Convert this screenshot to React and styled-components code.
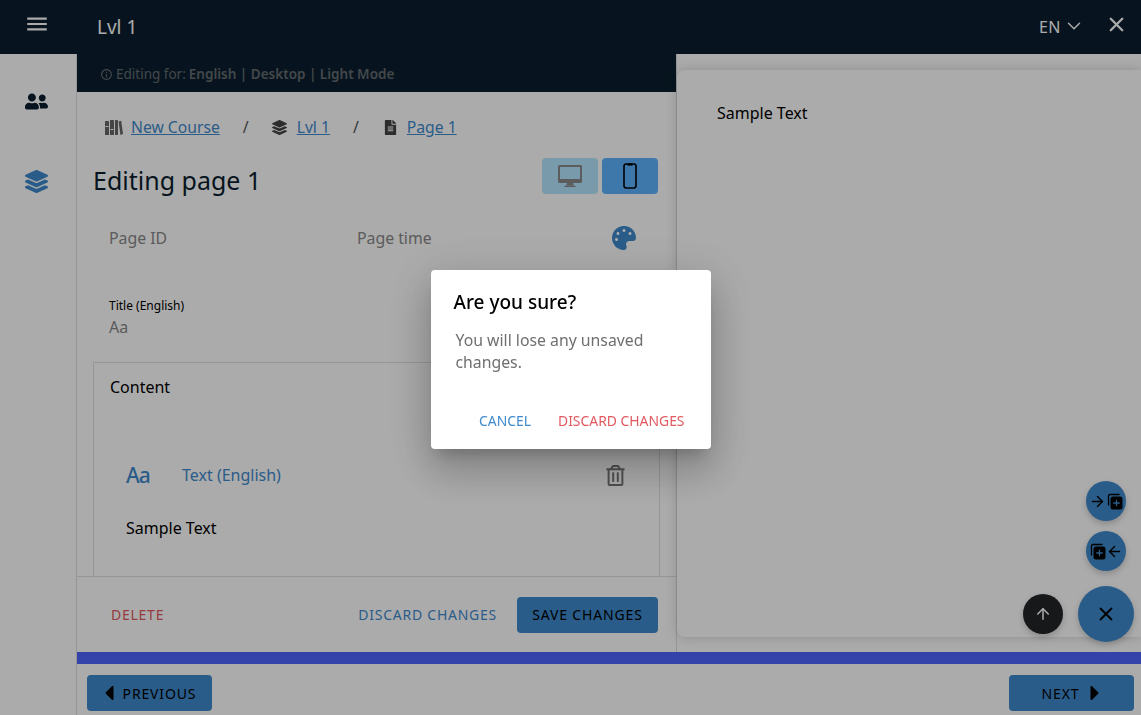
import styled, { createGlobalStyle } from "styled-components";
import {
  FaUserFriends,
  FaLayerGroup,
  FaFileAlt,
  FaPalette,
  FaRegTrashAlt,
  FaCaretLeft,
  FaCaretRight,
} from "react-icons/fa";
import { MdMenu, MdInfoOutline } from "react-icons/md";
import { FiChevronDown, FiX, FiArrowUp, FiArrowRight, FiArrowLeft } from "react-icons/fi";

const GlobalStyle = createGlobalStyle`
  html, body {
    margin: 0;
    padding: 0;
    height: 100%;
    overflow: hidden;
    background: #fff;
    font-family: "Noto Sans", "Open Sans", sans-serif;
    color: #000;
  }
  * { box-sizing: border-box; }
`;

const Page = styled.div`
  width: 100vw;
  height: 100vh;
  display: flex;
  overflow: hidden;
`;

const Sidebar = styled.nav`
  width: 77px;
  flex: none;
  border-right: 1px solid #e0e0e0;
  display: flex;
  flex-direction: column;
  align-items: center;
`;

const MenuCell = styled.div`
  width: 77px;
  height: 54px;
  background: #0b1f2f;
  color: #fff;
  display: flex;
  justify-content: center;
  padding: 11px 3px 0 0;
  font-size: 26px;
`;

const NavIcon = styled.div`
  color: ${(p) => p.$color};
  font-size: 23px;
  height: 23px;
  display: flex;
  margin: ${(p) => p.$top}px 3px 0 0;
`;

const Main = styled.div`
  flex: 1;
  min-width: 0;
  display: flex;
  flex-direction: column;
`;

const TopBar = styled.header`
  height: 54px;
  flex: none;
  background: #0b1f2f;
  color: #fff;
  display: flex;
  align-items: center;
  padding: 0 13px 0 20px;
`;

const TopTitle = styled.div`
  flex: 1;
  font-size: 19px;
`;

const Lang = styled.div`
  display: flex;
  align-items: center;
  font-size: 16px;
  letter-spacing: 0.5px;
  margin-right: 20px;
  svg { font-size: 22px; margin-left: 2px; margin-top: -3px; stroke-width: 1.6; }
`;

const CloseTop = styled.div`
  display: flex;
  font-size: 23px;
  margin-top: -5px;
  svg { stroke-width: 2.4; }
`;

const Columns = styled.div`
  height: 598px;
  flex: none;
  display: flex;
`;

const Editor = styled.section`
  width: 600px;
  flex: none;
  border-right: 1px solid #e0e0e0;
  display: flex;
  flex-direction: column;
`;

const EditingFor = styled.div`
  height: 38px;
  flex: none;
  background: #0b1f2f;
  color: #656c70;
  font-size: 13.5px;
  display: flex;
  align-items: center;
  gap: 3px;
  padding: 2px 0 0 23px;
  b { font-weight: 600; margin-left: 0; }
  svg { font-size: 13px; }
`;

const Scroll = styled.div`
  flex: 1;
  min-height: 0;
  overflow: hidden;
  padding: 0 16px;
`;

const Crumbs = styled.div`
  height: 70px;
  display: flex;
  align-items: center;
  padding-left: 12px;
  font-size: 15.7px;
`;

const Crumb = styled.div`
  display: flex;
  align-items: center;
  gap: ${(p) => p.$gap}px;
  color: #444;
  svg { font-size: 15px; flex: none; }
`;

const CrumbLink = styled.a`
  color: #3f8acd;
  text-decoration: underline;
`;

const Slash = styled.span`
  color: #555;
  margin: 0 ${(p) => p.$left}px 0 ${(p) => p.$gap}px;
`;

const TitleRow = styled.div`
  height: 36px;
  margin-top: -4px;
  display: flex;
  align-items: center;
  justify-content: space-between;
  padding-right: 2px;
`;

const Heading = styled.h1`
  margin: 8px 0 0;
  font-size: 25px;
  font-weight: 400;
  color: #0b1f2f;
`;

const ViewToggle = styled.div`
  display: flex;
  gap: 4px;
`;

const ViewButton = styled.div`
  width: 56px;
  height: 36px;
  border-radius: 4px;
  background: ${(p) => (p.$active ? "#5db4ff" : "#b5e6ff")};
  display: flex;
  align-items: center;
  justify-content: center;
`;

const MetaRow = styled.div`
  margin-top: 26px;
  height: 36px;
  display: flex;
  align-items: center;
  padding: 0 24px 0 16px;
  font-size: 15.8px;
  color: #888;
`;

const MetaItem = styled.div`
  width: 248px;
`;

const Palette = styled.div`
  margin-left: auto;
  display: flex;
  color: #3f8acd;
  font-size: 24px;
`;

const Field = styled.div`
  margin-top: 42px;
  padding-left: 16px;
  height: 64px;
`;

const FieldLabel = styled.div`
  font-size: 12px;
  line-height: 16px;
  color: #000;
`;

const FieldValue = styled.div`
  margin-top: 2px;
  font-size: 16px;
  line-height: 22px;
  color: #888;
`;

const ContentBox = styled.div`
  border: 1px solid #e0e0e0;
  width: 567px;
  height: 300px;
  padding: 13px 16px;
`;

const BoxTitle = styled.div`
  font-size: 16px;
  line-height: 22px;
`;

const TextHead = styled.div`
  margin-top: 60px;
  height: 34px;
  display: flex;
  align-items: center;
  padding: 0 17px 0 16px;
`;

const AaMark = styled.span`
  width: 56px;
  color: #3f8acd;
  font-size: 21px;
  font-weight: 500;
  letter-spacing: -1px;
`;

const TextLabel = styled.span`
  flex: 1;
  color: #3f8acd;
  font-size: 16px;
`;

const Trash = styled.div`
  display: flex;
  color: #777;
  font-size: 21px;
`;

const Sample = styled.p`
  margin: 25px 0 0 16px;
  font-size: 16px;
  line-height: 22px;
`;

const Actions = styled.div`
  height: 76px;
  flex: none;
  border-top: 1px solid #e0e0e0;
  display: flex;
  align-items: center;
  padding: 0 18px 0 34px;
  font-size: 14px;
  letter-spacing: 0.75px;
`;

const TextAction = styled.span`
  color: ${(p) => p.$color};
  margin: ${(p) => p.$margin || 0};
`;

const FilledButton = styled.div`
  height: 36px;
  border-radius: 4px;
  background: #3f8acd;
  color: #000;
  font-size: 14px;
  letter-spacing: 0.85px;
  display: flex;
  align-items: center;
  justify-content: center;
  gap: ${(p) => p.$gap || 0}px;
  width: ${(p) => p.$width}px;
  padding: ${(p) => p.$pad || "0"};
  svg { font-size: 24px; }
`;

const Preview = styled.section`
  flex: 1;
  min-width: 0;
  padding-top: 16px;
`;

const PreviewCard = styled.div`
  height: 567px;
  border-radius: 8px 0 0 8px;
  background: #fff;
  box-shadow: 0 0 12px rgba(0, 0, 0, 0.18);
  padding: 32px 40px;
  font-size: 16px;
  line-height: 22px;
`;

const ProgressBar = styled.div`
  height: 12px;
  flex: none;
  background: #4c64fc;
`;

const Footer = styled.footer`
  flex: 1;
  display: flex;
  align-items: center;
  justify-content: space-between;
  padding: 7px 7px 0 10px;
`;

const Fab = styled.div`
  position: absolute;
  left: ${(p) => p.$x - p.$size / 2}px;
  top: ${(p) => p.$y - p.$size / 2}px;
  width: ${(p) => p.$size}px;
  height: ${(p) => p.$size}px;
  border-radius: 50%;
  background: ${(p) => p.$bg};
  color: ${(p) => p.$fg};
  box-shadow: 0 3px 6px rgba(0, 0, 0, 0.2);
  display: flex;
  align-items: center;
  justify-content: center;
  font-size: ${(p) => p.$font}px;
`;

const Overlay = styled.div`
  position: fixed;
  inset: 0;
  background: rgba(0, 0, 0, 0.33);
  display: flex;
  align-items: center;
  justify-content: center;
  padding-top: 4px;
`;

const Dialog = styled.div`
  width: 280px;
  height: 179px;
  background: #fff;
  border-radius: 4px;
  box-shadow: 0 11px 15px -7px rgba(0, 0, 0, 0.2), 0 24px 38px 3px rgba(0, 0, 0, 0.14),
    0 9px 46px 8px rgba(0, 0, 0, 0.12);
  padding: 19px 26px 0 23px;
`;

const DialogTitle = styled.h2`
  margin: 0;
  font-size: 19px;
  line-height: 26px;
  font-weight: 500;
  color: #000;
`;

const DialogBody = styled.p`
  margin: 14px 0 0 2px;
  font-size: 15.8px;
  line-height: 22px;
  color: #6f6f6f;
`;

const DialogActions = styled.div`
  margin-top: 38px;
  display: flex;
  justify-content: flex-end;
  gap: 27px;
  font-size: 13.9px;
  line-height: 20px;
`;

const AddCopyFrom = styled.span`
  display: flex;
  align-items: center;
  gap: ${(p) => p.$gap}px;
`;

const PhoneGlyph = () => (
  <svg width="14" height="26" viewBox="0 0 14 26" fill="none" stroke="#000" strokeWidth="1.6">
    <rect x="1" y="1" width="12" height="24" rx="2.2" />
    <path d="M4.5 1.6h5" strokeWidth="2" />
  </svg>
);

const DesktopGlyph = () => (
  <svg width="26" height="24" viewBox="0 0 26 24" fill="#8a8a8a">
    <path d="M2.5 1h21A1.5 1.5 0 0 1 25 2.5v15a1.5 1.5 0 0 1-1.5 1.5h-21A1.5 1.5 0 0 1 1 17.5v-15A1.5 1.5 0 0 1 2.5 1zM3 3v12h20V3z" fillRule="evenodd" />
    <path d="M10 19h6l.6 2.4H9.4z" />
    <rect x="7.5" y="21.4" width="11" height="1.6" rx="0.5" />
  </svg>
);

const BooksGlyph = () => (
  <svg width="18" height="15" viewBox="0 0 18 15" fill="#666">
    <rect x="0" y="1" width="4" height="14" rx="0.5" />
    <rect x="5" y="0" width="4" height="15" rx="0.5" />
    <rect x="10" y="0" width="3" height="15" rx="0.5" />
    <path d="M13.6 1.5l2.6-.7 1.8 13.3-2.6.9z" />
    <rect x="0.5" y="6" width="3" height="1" fill="#fff" />
    <rect x="5.5" y="9" width="3" height="1" fill="#fff" />
  </svg>
);

// stacked pages with a plus, used by both copy buttons
const CopyPlus = () => (
  <svg width="17" height="17" viewBox="0 0 17 17">
    <path d="M2.5 12.5V3A1.5 1.5 0 0 1 4 1.500h9.500" fill="none" stroke="#000" strokeWidth="1.3" />
    <rect x="4.500" y="3.500" width="12" height="13" rx="2.500" fill="#000" />
    <path d="M10.500 6.800v6.400M7.300 10h6.400" stroke="#3f8acd" strokeWidth="1.300" />
  </svg>
);

const App = () => (
  <>
    <GlobalStyle />
    <Page>
      <Sidebar>
        <MenuCell>
          <MdMenu />
        </MenuCell>
        <NavIcon $color="#0b1f2f" $top={36}>
          <FaUserFriends />
        </NavIcon>
        <NavIcon $color="#3f8acd" $top={57}>
          <FaLayerGroup />
        </NavIcon>
      </Sidebar>
      <Main>
        <TopBar>
          <TopTitle>Lvl 1</TopTitle>
          <Lang>
            EN
            <FiChevronDown />
          </Lang>
          <CloseTop>
            <FiX />
          </CloseTop>
        </TopBar>
        <Columns>
          <Editor>
            <EditingFor>
              <MdInfoOutline />
              Editing for: <b>English | Desktop | Light Mode</b>
            </EditingFor>
            <Scroll>
              <Crumbs>
                <Crumb $gap={8}>
                  <BooksGlyph />
                  <CrumbLink>New Course</CrumbLink>
                </Crumb>
                <Slash $gap={23} $left={23}>/</Slash>
                <Crumb $gap={10}>
                  <FaLayerGroup />
                  <CrumbLink>Lvl 1</CrumbLink>
                </Crumb>
                <Slash $gap={23} $left={24}>/</Slash>
                <Crumb $gap={9}>
                  <FaFileAlt />
                  <CrumbLink>Page 1</CrumbLink>
                </Crumb>
              </Crumbs>
              <TitleRow>
                <Heading>Editing page 1</Heading>
                <ViewToggle>
                  <ViewButton>
                    <DesktopGlyph />
                  </ViewButton>
                  <ViewButton $active>
                    <PhoneGlyph />
                  </ViewButton>
                </ViewToggle>
              </TitleRow>
              <MetaRow>
                <MetaItem>Page ID</MetaItem>
                <MetaItem>Page time</MetaItem>
                <Palette>
                  <FaPalette />
                </Palette>
              </MetaRow>
              <Field>
                <FieldLabel>Title (English)</FieldLabel>
                <FieldValue>Aa</FieldValue>
              </Field>
              <ContentBox>
                <BoxTitle>Content</BoxTitle>
                <TextHead>
                  <AaMark>Aa</AaMark>
                  <TextLabel>Text (English)</TextLabel>
                  <Trash>
                    <FaRegTrashAlt />
                  </Trash>
                </TextHead>
                <Sample>Sample Text</Sample>
              </ContentBox>
            </Scroll>
            <Actions>
              <TextAction $color="#e05a60">DELETE</TextAction>
              <TextAction $color="#3f8acd" $margin="0 20px 0 auto">
                DISCARD CHANGES
              </TextAction>
              <FilledButton $width={141}>SAVE CHANGES</FilledButton>
            </Actions>
          </Editor>
          <Preview>
            <PreviewCard>Sample Text</PreviewCard>
          </Preview>
        </Columns>
        <ProgressBar />
        <Footer>
          <FilledButton $width={125} $gap={2} $pad="0 6px 0 0">
            <FaCaretLeft />
            PREVIOUS
          </FilledButton>
          <FilledButton $width={125} $gap={4} $pad="0 0 0 6px">
            NEXT
            <FaCaretRight />
          </FilledButton>
        </Footer>
      </Main>
    </Page>

    <Fab $x={1106} $y={501} $size={40} $bg="#3f8acd" $fg="#000" $font={17}>
      <AddCopyFrom $gap={0}>
        <FiArrowRight />
        <CopyPlus />
      </AddCopyFrom>
    </Fab>
    <Fab $x={1106} $y={551} $size={40} $bg="#3f8acd" $fg="#000" $font={17}>
      <AddCopyFrom $gap={0}>
        <CopyPlus />
        <FiArrowLeft />
      </AddCopyFrom>
    </Fab>
    <Fab $x={1043} $y={614} $size={40} $bg="#232427" $fg="#fff" $font={18}>
      <FiArrowUp />
    </Fab>
    <Fab $x={1106} $y={614} $size={56} $bg="#3f8acd" $fg="#000" $font={22}>
      <FiX />
    </Fab>

    <Overlay>
      <Dialog>
        <DialogTitle>Are you sure?</DialogTitle>
        <DialogBody>You will lose any unsaved changes.</DialogBody>
        <DialogActions>
          <TextAction $color="#3f8acd">CANCEL</TextAction>
          <TextAction $color="#e05a60">DISCARD CHANGES</TextAction>
        </DialogActions>
      </Dialog>
    </Overlay>
  </>
);

export default App;
